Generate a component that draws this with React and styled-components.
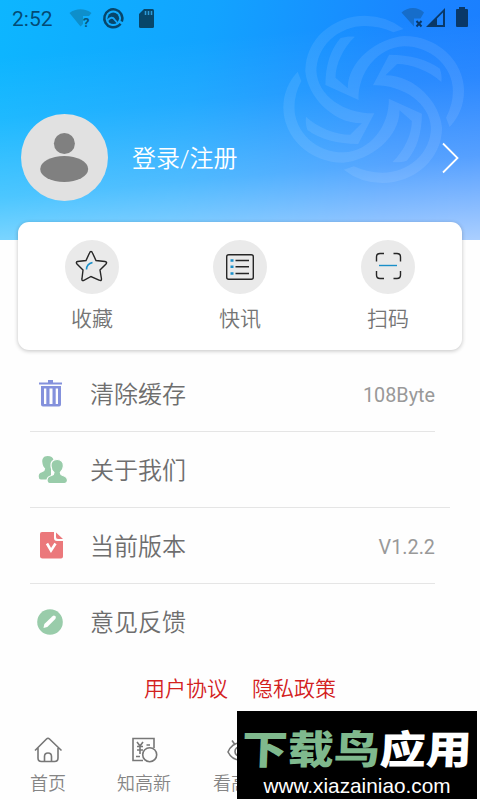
import styled, { createGlobalStyle } from "styled-components";

const GlobalStyle = createGlobalStyle`
  * {
    box-sizing: border-box;
  }
  body {
    margin: 0;
    background: #fefefe;
    font-family: Roboto, "Noto Sans CJK SC", sans-serif;
    font-weight: 350;
  }
  svg {
    display: block;
    flex: none;
  }
`;

const Screen = styled.div`
  position: relative;
  width: 480px;
  height: 800px;
  overflow: hidden;
  display: flex;
  flex-direction: column;
`;

const Header = styled.header`
  position: relative;
  height: 240px;
  flex: none;
  background:
    linear-gradient(
      175deg,
      rgba(255, 255, 255, 0) 20%,
      rgba(255, 255, 255, 0.07) 42%,
      rgba(255, 255, 255, 0.26) 70%,
      rgba(255, 255, 255, 0.63) 100%
    ),
    linear-gradient(100deg, #0db6ff 0%, #12a4ff 40%, #1a84ff 80%, #1b7dff 100%);
`;

const Swirl = styled.svg`
  position: absolute;
  top: 0;
  right: 0;
`;

const StatusBar = styled.div`
  position: relative;
  height: 36px;
  display: flex;
  align-items: center;
  padding: 0 11px 0 12px;
  color: rgba(0, 34, 62, 0.72);
`;

const Clock = styled.span`
  width: 57px;
  padding-top: 2px;
  font-size: 21px;
  font-weight: 400;
  line-height: 24px;
`;

const Profile = styled.div`
  position: relative;
  height: 87px;
  margin-top: 78px;
  padding: 0 20px 0 21px;
  display: flex;
  align-items: center;
`;

const Login = styled.span`
  flex: 1;
  margin-left: 24px;
  padding-top: 3px;
  color: #fff;
  font-size: 24px;
  line-height: 36px;
`;

const Card = styled.section`
  position: relative;
  flex: none;
  height: 128px;
  margin: -18px 18px 0;
  display: grid;
  grid-template-columns: repeat(3, 1fr);
  background: #fff;
  border-radius: 11px;
  box-shadow: 0 1px 4px rgba(0, 0, 0, 0.24);
`;

const Shortcut = styled.div`
  display: flex;
  flex-direction: column;
  align-items: center;
  padding-top: 18px;
  color: #757575;
  font-size: 21px;
  line-height: 30px;
`;

const ShortcutIcon = styled.div`
  width: 54px;
  height: 54px;
  margin-bottom: 10px;
  border-radius: 50%;
  background: #eaeaea;
`;

const Menu = styled.section`
  flex: none;
  padding: 6px 30px 0;
`;

const Row = styled.div`
  height: 76px;
  display: flex;
  align-items: center;
  margin-right: ${(p) => (p.$wide ? "0" : "15px")};
  border-bottom: 1px solid ${(p) => (p.$last ? "transparent" : "#e5e5e5")};
  color: #6e6e6e;
`;

const RowIcon = styled.div`
  width: 40px;
  margin-right: 20px;
`;

const RowLabel = styled.span`
  flex: 1;
  padding-top: 2px;
  font-size: 24px;
  line-height: 36px;
`;

const RowValue = styled.span`
  padding-top: 3px;
  color: #999;
  font-size: 19.8px;
  font-weight: 400;
`;

const Links = styled.div`
  flex: none;
  display: flex;
  justify-content: center;
  gap: 24px;
  margin-top: 14px;
  color: #d3211d;
  font-size: 21px;
  line-height: 30px;
`;

const TabBar = styled.nav`
  display: grid;
  grid-template-columns: repeat(5, 96px);
  margin-top: 30px;
`;

const Tab = styled.div`
  display: flex;
  flex-direction: column;
  align-items: center;
  gap: 7px;
  color: #858585;
  font-size: 18px;
  line-height: 26px;
`;

const Watermark = styled.div`
  position: absolute;
  left: 237px;
  top: 711px;
  width: 240px;
  height: 88px;
  display: flex;
  flex-direction: column;
  align-items: center;
  background: #000;
  color: #fff;
`;

const WatermarkTitle = styled.div`
  height: 62px;
  padding-top: 10px;
  font-family: "Noto Sans CJK SC", sans-serif;
  font-size: 46px;
  font-weight: 900;
  line-height: 52px;
  white-space: nowrap;
  transform: scaleY(0.86) skewX(-2deg);
  span {
    color: #7fb98d;
  }
`;

const WatermarkUrl = styled.div`
  font-family: "Liberation Sans", Arial, sans-serif;
  font-size: 20.8px;
  font-weight: 400;
  line-height: 26px;
`;

const petal =
  "M83 -211A166 166 0 0 0 -24 -251A166 166 0 0 0 -190 -85C-184 -10 -115 72 -33 72L-65 106C-105 106 -155 85 -188 52C-190 65 -188 80 -184 92C-150 120 -100 134 -43 134L2 42C-80 44 -156 -10 -159 -85A135 135 0 0 1 -24 -220Q16 -220 55 -201Z";

const SwirlLogo = () => (
  <Swirl width="210" height="245" viewBox="0 0 630 735" fill="#fff" fillOpacity="0.09">
    <g transform="translate(311 298) scale(1.08 1)">
      {[0, 90, 180, 270].map((angle) => (
        <path key={angle} d={petal} transform={`rotate(${angle})`} />
      ))}
    </g>
  </Swirl>
);

const StatusLeft = () => (
  <svg width="100" height="36" viewBox="69 0 100 36">
    <path d="M69.500 13C76 8 85 8 91.500 13L89 16H83V24L80.500 26.500Z" fill="#0e8fcb" />
    <text x="83" y="26.500" fontSize="13" fontWeight="700" fill="#07577d">?</text>
    <circle cx="113.300" cy="18.300" r="9" fill="none" stroke="#07466a" strokeWidth="2.500" strokeDasharray="50 2.500 4.100" transform="rotate(60 113.300 18.300)" />
    <circle cx="113.300" cy="18.300" r="5.800" fill="#07466a" />
    <path d="M107.500 20.500C110 17 113 17 114.500 19.500L117.500 23" fill="none" stroke="#12a6fb" strokeWidth="1.800" />
    <path d="M144 9H152.500Q154 9 154 10.500V26.500Q154 28 152.500 28H140.500Q139 28 139 26.500V14Z" fill="#07466a" />
    <path d="M145.500 11V15M148.500 11V15M151.500 11V15" stroke="#2c9ad8" strokeWidth="1.500" />
  </svg>
);

const StatusRight = () => (
  <svg width="70" height="36" viewBox="399 0 70 36" style={{ marginLeft: "auto" }}>
    <path d="M401.500 12.500C408 6.500 418 6.500 424 12.500L420.500 18.500H414V26.500Z" fill="#166dca" />
    <path d="M416.500 21L421.500 26.500M421.500 21L416.500 26.500" stroke="#093868" strokeWidth="2" />
    <path d="M426 27L445 8V27ZM437 18.500V25H443V12.500Z" fill="#093868" fillRule="evenodd" />
    <path d="M459 7H465V9H467Q468 9 468 10V26Q468 27 467 27H457Q456 27 456 26V10Q456 9 457 9H459Z" fill="#093868" />
  </svg>
);

const Avatar = () => (
  <svg width="87" height="87" viewBox="0 0 87 87">
    <circle cx="43.500" cy="43.500" r="43.500" fill="#e1e1e1" />
    <circle cx="43.400" cy="29.500" r="10.500" fill="#808080" />
    <ellipse cx="43.200" cy="55" rx="24" ry="13" fill="#808080" />
  </svg>
);

const Chevron = () => (
  <svg width="20" height="34" viewBox="0 0 20 34" fill="none" stroke="#fff" strokeWidth="1.800">
    <path d="M3 2.500L17.500 17L3 31.500" />
  </svg>
);

const shortcuts = [
  {
    label: "收藏",
    icon: (
      <>
        <path d="M26 11.500Q27 11.500 27.500 13L31 20.500L40 21.500Q42.500 22 41 24L35 30L36.500 39Q36.500 41.500 34 40L26 36.500L18.500 40.500Q16.500 41 17 38.500L18 30L12 24Q10.500 22 12.500 21.500L21 20.500L24.500 13Q25 11.500 26 11.500Z" />
        <path d="M21.500 29.500Q21.500 24 27.500 22.500" stroke="#1a8fc9" strokeWidth="1.600" />
      </>
    ),
  },
  {
    label: "快讯",
    icon: (
      <>
        <rect x="13.700" y="14.700" width="26.600" height="24.600" rx="2" />
        <path d="M22.500 20.500H36M22.500 26.700H36M22.500 33.500H36" />
        <path d="M17.500 20.500H20.500M17.500 26.700H20.500M17.500 33.500H20.500" stroke="#1a8fc9" strokeWidth="2.600" />
      </>
    ),
  },
  {
    label: "扫码",
    icon: (
      <>
        <path d="M15.500 21.500V17Q15.500 13.500 19 13.500H23M32.500 13.500H36Q39.500 13.500 39.500 17V21.500M39.500 31V35Q39.500 38.500 36 38.500H32.500M23 38.500H19Q15.500 38.500 15.500 35V31" />
        <path d="M18 25.500H36" stroke="#1a8fc9" strokeWidth="1.400" />
      </>
    ),
  },
];

const TrashIcon = () => (
  <svg width="40" height="40" viewBox="0 0 40 40" fill="#8491dc">
    <path d="M9 8.500H18V6H23V8.500H32V10.500H9Z" />
    <path fillRule="evenodd" d="M11 12H31V30.500Q31 32.500 29 32.500H13Q11 32.500 11 30.500ZM14 14.500V30H16.300V14.500ZM19.500 14.500V30H22.500V14.500ZM25.700 14.500V30H28V14.500Z" />
  </svg>
);

const PeopleIcon = () => (
  <svg width="40" height="40" viewBox="0 0 40 40" fill="#99ccaa">
    <path d="M17.500 6C13.500 6 12 9 12.300 12C12.500 15.500 14 17.500 15.200 18.500Q15.200 21 12.500 22C9.500 23 8.800 24 8.800 27Q8.800 29.500 11 29.500H21V20L23.500 10C23 7.500 21 6 17.500 6Z" />
    <path
      d="M27.200 9.500C22.500 9.500 20.700 12 21 16C21.200 19 22.700 21.500 24 22.500Q24 24.500 21.500 25.500C18 26.500 17 27.500 17 30.500Q17 33.500 19.500 33.500H34.500Q37.500 33.500 37.500 30.500C37.500 27.500 36 26.500 32.800 25.500Q30.300 24.500 30.300 22.500C32 21 33.300 19 33.400 16C33.500 12 31.500 9.500 27.200 9.500Z"
      stroke="#fff"
      strokeWidth="1.200"
    />
  </svg>
);

const VersionIcon = () => (
  <svg width="40" height="40" viewBox="0 0 40 40">
    <path d="M12 6H24V12Q24 15 27 15H33V30.500Q33 32.500 31 32.500H12.500Q10 32.500 10 30.500V8Q10 6 12 6Z" fill="#eb787b" />
    <path d="M26 6.500L33 13H28Q26 13 26 11Z" fill="#eb787b" />
    <path d="M17 17.500L21 24.500L25.500 17.500" fill="none" stroke="#fff" strokeWidth="2.600" />
  </svg>
);

const FeedbackIcon = () => (
  <svg width="40" height="40" viewBox="0 0 40 40">
    <circle cx="20" cy="20" r="12.800" fill="#99ccaa" />
    <path d="M13.500 26L14.300 22L22.500 14.200Q24 12.800 25.300 14.200Q26.500 15.500 25.300 17L17.300 25Z" fill="#fff" />
  </svg>
);

const rows = [
  { label: "清除缓存", value: "108Byte", icon: <TrashIcon /> },
  { label: "关于我们", icon: <PeopleIcon />, wide: true },
  { label: "当前版本", value: "V1.2.2", icon: <VersionIcon /> },
  { label: "意见反馈", icon: <FeedbackIcon /> },
];

const tabs = [
  {
    label: "首页",
    icon: <path d="M2 16.500L13.500 5Q15 3.500 16.500 5L28.500 16.500M5 14V24Q5 27.500 8.500 27.500H21.500Q25 27.500 25 24V14M11.500 27V22.500Q11.500 19 15 19Q18.500 19 18.500 22.500V27" />,
  },
  {
    label: "知高新",
    icon: (
      <>
        <path d="M14 26.500H4V4.500H25V14M8 8L11 12L14 8M8 12.500H14M8 16H14M11 12V20M17.500 11H21M7 22.500H11" />
        <circle cx="20.700" cy="20.700" r="7" />
      </>
    ),
  },
  {
    label: "看高新",
    icon: (
      <>
        <path d="M3 18Q7 9 15 9Q23 9 28 18Q23 26 15 26Q7 26 3 18ZM9.500 10L7 6.500M15 9V5" />
        <circle cx="15" cy="17.500" r="5" />
      </>
    ),
  },
];

export default function App() {
  return (
    <Screen>
      <GlobalStyle />
      <Header>
        <SwirlLogo />
        <StatusBar>
          <Clock>2:52</Clock>
          <StatusLeft />
          <StatusRight />
        </StatusBar>
        <Profile>
          <Avatar />
          <Login>登录/注册</Login>
          <Chevron />
        </Profile>
      </Header>
      <Card>
        {shortcuts.map(({ label, icon }) => (
          <Shortcut key={label}>
            <ShortcutIcon>
              <svg width="54" height="54" viewBox="0 0 54 54" fill="none" stroke="#262626" strokeWidth="1.400">
                {icon}
              </svg>
            </ShortcutIcon>
            {label}
          </Shortcut>
        ))}
      </Card>
      <Menu>
        {rows.map(({ label, value, icon, wide }, i) => (
          <Row key={label} $wide={wide} $last={i === rows.length - 1}>
            <RowIcon>{icon}</RowIcon>
            <RowLabel>{label}</RowLabel>
            {value && <RowValue>{value}</RowValue>}
          </Row>
        ))}
      </Menu>
      <Links>
        <span>用户协议</span>
        <span>隐私政策</span>
      </Links>
      <TabBar>
        {tabs.map(({ label, icon }) => (
          <Tab key={label}>
            <svg width="30" height="30" viewBox="0 0 30 30" fill="none" stroke="#777" strokeWidth="1.600">
              {icon}
            </svg>
            {label}
          </Tab>
        ))}
      </TabBar>
      <Watermark>
        <WatermarkTitle>
          <span>下载鸟</span>应用
        </WatermarkTitle>
        <WatermarkUrl>www.xiazainiao.com</WatermarkUrl>
      </Watermark>
    </Screen>
  );
}
